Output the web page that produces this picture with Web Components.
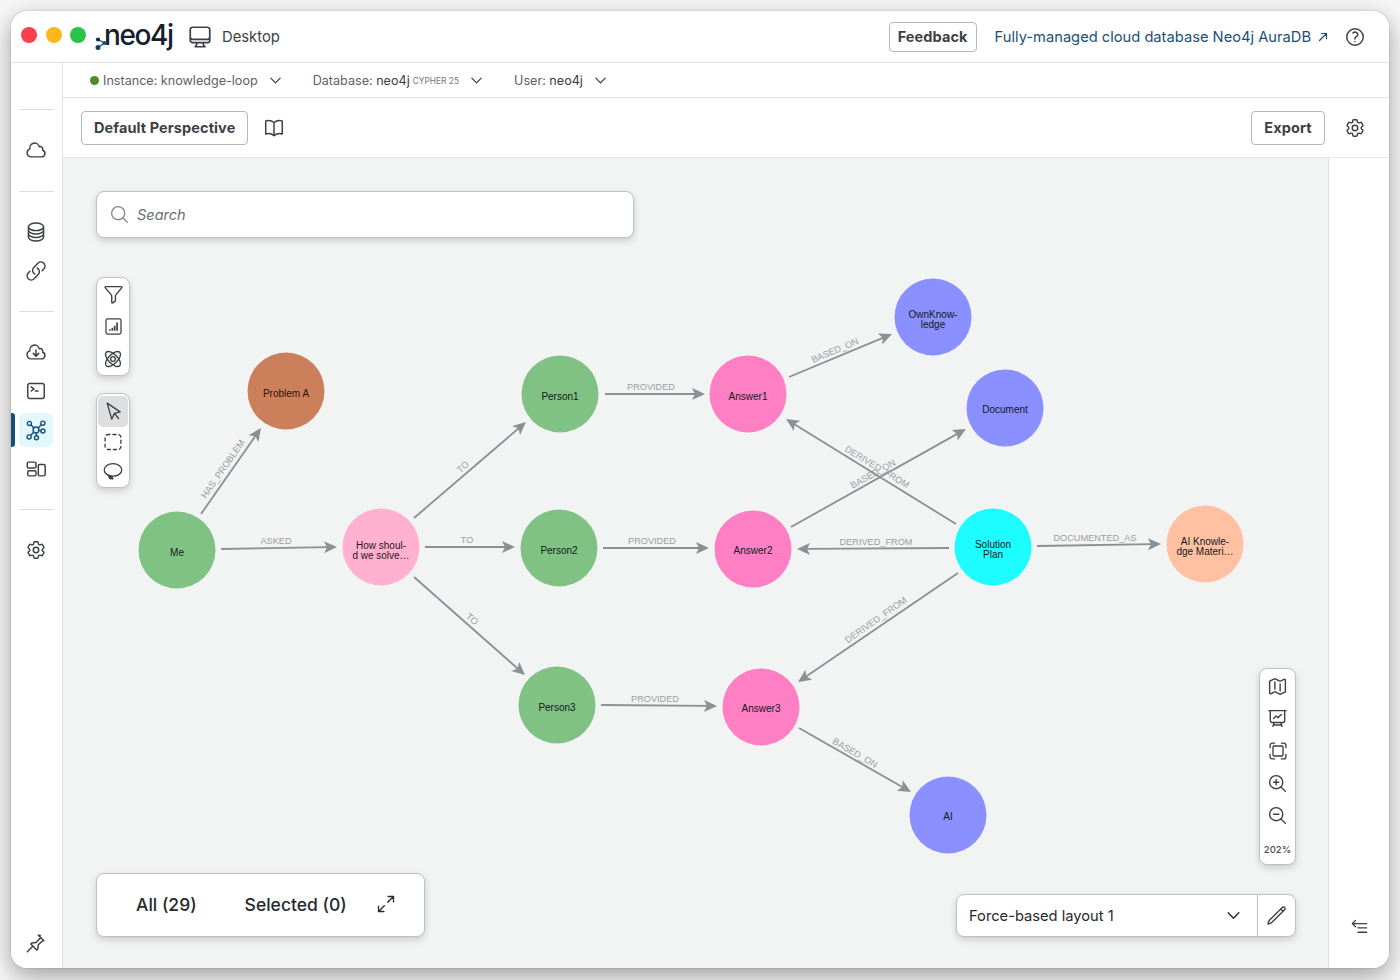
<!DOCTYPE html>
<html><head><meta charset="utf-8"><title>Neo4j Desktop</title>
<style>
html,body{margin:0;height:100%;}
body{width:1400px;height:980px;overflow:hidden;background:#f7f7f7;font-family:"Inter","Liberation Sans",sans-serif;color:#3a3d42;padding:11px 11px 12px;box-sizing:border-box;display:flex;}
</style></head>
<body>
<neo-window>
  <neo-titlebar slot="title"></neo-titlebar>
  <neo-sidebar slot="side"></neo-sidebar>
  <neo-connbar slot="conn"></neo-connbar>
  <neo-toolbar slot="tools"></neo-toolbar>
  <neo-canvas slot="canvas"></neo-canvas>
</neo-window>
<script>
const P={
cloud:'<path d="M2.25 15a4.5 4.5 0 004.5 4.5H18a3.75 3.75 0 001.332-7.257 3 3 0 00-3.758-3.848 5.25 5.25 0 00-10.233 2.33A4.5 4.5 0 002.25 15z"/>',
db:'<path d="M20.25 6.375c0 2.278-3.694 4.125-8.25 4.125S3.75 8.653 3.75 6.375m16.5 0c0-2.278-3.694-4.125-8.25-4.125S3.75 4.097 3.75 6.375m16.5 0v11.25c0 2.278-3.694 4.125-8.25 4.125s-8.25-1.847-8.25-4.125V6.375m16.5 0v3.75m-16.5-3.75v3.75m16.5 0v3.75C20.25 16.153 16.556 18 12 18s-8.25-1.847-8.25-4.125v-3.75m16.5 0c0 2.278-3.694 4.125-8.25 4.125s-8.25-1.847-8.25-4.125"/>',
link:'<path d="M13.19 8.688a4.5 4.5 0 011.242 7.244l-4.5 4.5a4.5 4.5 0 01-6.364-6.364l1.757-1.757m13.35-.622l1.757-1.757a4.5 4.5 0 00-6.364-6.364l-4.5 4.5a4.5 4.5 0 001.242 7.244"/>',
clouddown:'<path d="M12 9.75v6.75m0 0l-3-3m3 3l3-3m-8.25 6a4.5 4.5 0 01-1.41-8.775 5.25 5.25 0 0110.233-2.33 3 3 0 013.758 3.848A3.752 3.752 0 0118 19.5H6.75z"/>',
term:'<path d="M6.75 7.5l3 2.25-3 2.25m4.5 0h3m-9 8.25h13.5A2.25 2.25 0 0021 18V6a2.25 2.25 0 00-2.25-2.25H5.25A2.25 2.25 0 003 6v12a2.25 2.25 0 002.25 2.25z"/>',
gear:'<path d="M9.594 3.94c.09-.542.56-.94 1.11-.94h2.593c.55 0 1.02.398 1.11.94l.213 1.281c.063.374.313.686.645.87.074.04.147.083.22.127.324.196.72.257 1.075.124l1.217-.456a1.125 1.125 0 011.37.49l1.296 2.247a1.125 1.125 0 01-.26 1.431l-1.003.827c-.293.24-.438.613-.431.992a6.759 6.759 0 010 .255c-.007.378.138.75.43.99l1.005.828c.424.35.534.954.26 1.43l-1.298 2.247a1.125 1.125 0 01-1.369.491l-1.217-.456c-.355-.133-.75-.072-1.076.124a6.57 6.57 0 01-.22.128c-.331.183-.581.495-.644.869l-.213 1.28c-.09.543-.56.941-1.11.941h-2.594c-.55 0-1.02-.398-1.11-.94l-.213-1.281c-.062-.374-.312-.686-.644-.87a6.52 6.52 0 01-.22-.127c-.325-.196-.72-.257-1.076-.124l-1.217.456a1.125 1.125 0 01-1.369-.49l-1.297-2.247a1.125 1.125 0 01.26-1.431l1.004-.827c.292-.24.437-.613.43-.992a6.932 6.932 0 010-.255c.007-.378-.138-.75-.43-.99l-1.004-.828a1.125 1.125 0 01-.26-1.43l1.297-2.247a1.125 1.125 0 011.37-.491l1.216.456c.356.133.751.072 1.076-.124.072-.044.146-.087.22-.128.332-.183.582-.495.644-.869l.214-1.281z"/><path d="M15 12a3 3 0 11-6 0 3 3 0 016 0z"/>',
book:'<path d="M12 6.042A8.967 8.967 0 006 3.75c-1.052 0-2.062.18-3 .512v14.25A8.987 8.987 0 016 18c2.305 0 4.408.867 6 2.292m0-14.25a8.966 8.966 0 016-2.292c1.052 0 2.062.18 3 .512v14.25A8.987 8.987 0 0018 18a8.967 8.967 0 00-6 2.292m0-14.25v14.25"/>',
desktop:'<path d="M9 17.25v1.007a3 3 0 01-.879 2.122L7.5 21h9l-.621-.621A3 3 0 0115 18.257V17.25m6-12V15a2.25 2.25 0 01-2.25 2.25H5.25A2.25 2.25 0 013 15V5.25m18 0A2.25 2.25 0 0018.75 3H5.25A2.25 2.25 0 003 5.25m18 0V12a2.25 2.25 0 01-2.25 2.25H5.25A2.25 2.25 0 013 12V5.25"/>',
help:'<path d="M9.879 7.519c1.171-1.025 3.071-1.025 4.242 0 1.172 1.025 1.172 2.687 0 3.712-.203.179-.43.326-.67.442-.745.361-1.45.999-1.45 1.827v.75M21 12a9 9 0 11-18 0 9 9 0 0118 0zm-9 5.25h.008v.008H12v-.008z"/>',
upright:'<path d="M5 19L19 5m0 0H8.5M19 5v10.5"/>',
chevron:'<path d="M19.5 8.25l-7.5 7.5-7.5-7.5"/>',
funnel:'<path d="M3.2 3h17.600c.7 0 1.100.8.6 1.400l-6.500 7.700c-.4.5-.7 1.100-.7 1.800v4.600c0 .6-.3 1-.7 1.300l-2.300 1.700c-.5.400-1.200 0-1.200-.6v-7c0-.7-.3-1.300-.7-1.800L2.600 4.400c-.5-.6-.1-1.400.6-1.400z"/>',
chart:'<rect x="2.500" y="2.500" width="19" height="19" rx="2.200"/><path d="M7.500 17.500v-2M10.500 17.500v-4M13.500 17.500v-6.500M16.500 17.500V7" stroke-width="2.100" stroke-linecap="butt"/>',
atom:'<ellipse cx="12" cy="12" rx="11.500" ry="5.400" transform="rotate(45 12 12)"/><ellipse cx="12" cy="12" rx="11.500" ry="5.400" transform="rotate(-45 12 12)"/><circle cx="12" cy="12" r="2.800"/>',
cursor:'<path d="M5 2.500l15.500 10.500-6.800 1.800-3.200 7L5 2.500zM13.700 14.800l5 6.200"/>',
marquee:'<rect x="2.500" y="3" width="19" height="18" rx="3.500" stroke-dasharray="3.700 3.700" stroke-dashoffset="1.500"/>',
lasso:'<ellipse cx="12" cy="9.500" rx="10.500" ry="7.500"/><path d="M6 15.500c.3 1.500 1.500 2.500 3 2.500 1.400 0 1.700 2.200.2 2.200-1.300 0-2.300-1.200-1.600-2.300.6-.9 2.300-1 3.200.1.600.8.900 1.500 1 2.500"/>',
map:'<path d="M9 6.750V15m6-6v8.250m.503 3.498l4.875-2.437c.381-.19.622-.58.622-1.006V4.820c0-.836-.88-1.380-1.628-1.006l-3.869 1.934c-.317.159-.69.159-1.006 0L9.503 3.252a1.125 1.125 0 00-1.006 0L3.622 5.689C3.240 5.880 3 6.270 3 6.695V19.180c0 .836.88 1.380 1.628 1.006l3.869-1.934c.317-.159.69-.159 1.006 0l4.994 2.497c.317.158.69.158 1.006 0z"/>',
slides:'<path d="M3.750 3v11.250A2.250 2.250 0 006 16.500h2.250M3.750 3h-1.500m1.500 0h16.500m0 0h1.500m-1.500 0v11.250A2.250 2.250 0 0118 16.500h-2.250m-7.500 0h7.500m-7.500 0l-1 3m8.500-3l1 3m0 0l.5 1.500m-.5-1.500h-9.500m0 0l-.5 1.500m.75-9l3-3 2.148 2.148A12.061 12.061 0 0116.500 7.605"/>',
fit:'<rect x="6" y="6" width="12" height="12" rx="1.200"/><path d="M2.500 8V5.500a3 3 0 013-3H8M16 2.500h2.500a3 3 0 013 3V8M21.500 16v2.500a3 3 0 01-3 3H16M8 21.500H5.500a3 3 0 01-3-3V16"/>',
zoomin:'<path d="M21 21l-5.197-5.197m0 0A7.500 7.500 0 105.196 5.196a7.500 7.500 0 0010.607 10.607zM10.500 7.500v6m3-3h-6"/>',
zoomout:'<path d="M21 21l-5.197-5.197m0 0A7.500 7.500 0 105.196 5.196a7.500 7.500 0 0010.607 10.607zM13.500 10.500h-6"/>',
search:'<path d="M21 21l-5.197-5.197m0 0A7.500 7.500 0 105.196 5.196a7.500 7.500 0 0010.607 10.607z"/>',
expand:'<path d="M14 10L21 3m0 0h-6.500M21 3v6.500M10 14l-7 7m0 0h6.500M3 21v-6.500"/>',
pencil:'<path d="M16.862 4.487l1.687-1.688a1.875 1.875 0 112.652 2.652L6.832 19.820a4.500 4.500 0 01-1.897 1.130l-2.685.8.8-2.685a4.500 4.500 0 011.130-1.897L16.863 4.487zm0 0L19.500 7.125"/>',
collapse:'<path d="M3 7H21M3 7l4-4M3 7l4 4M10 12.500h11M10 18h11"/>',
pin:'<path d="M14.500 3.500l6 6-1.500.3-4.500 4.200-.5 4.500-1.200 1.200-6.500-6.500 1.200-1.200 4.500-.5 4.200-4.500.3-3.500zM8 16l-5.500 5.500"/>',
dash:'<rect x="2.500" y="4.500" width="9.500" height="6.500" rx="1.500"/><rect x="3" y="14" width="9" height="5.500" rx="1.500"/><rect x="14.500" y="7" width="7.500" height="12.500" rx="1.500"/>',
graph:'<circle cx="12" cy="12" r="3.200"/><circle cx="4.800" cy="4.800" r="2.200"/><circle cx="19.500" cy="4.500" r="2.200"/><circle cx="4.500" cy="19.500" r="2.200"/><circle cx="19.500" cy="13" r="2.200"/><circle cx="12.500" cy="20.500" r="2.200"/><path d="M6.500 6.500l3.200 3.200M17.800 6.200l-3.500 3.600M6.200 17.800l3.500-3.500M15.200 12.400l2.200.3M12.200 15.200l.2 3.100"/>'
};
function tpl(css,html){const t=document.createElement('template');t.innerHTML=`<style>${css}</style>${html}`;return t;}
class Base extends HTMLElement{
  connectedCallback(){ if(this.shadowRoot)return; this.attachShadow({mode:'open'}).appendChild(this.constructor.t.content.cloneNode(true)); }
}
class NeoIcon extends HTMLElement{
  static get observedAttributes(){return ['name'];}
  attributeChangedCallback(){ if(this.shadowRoot)this.render(); }
  connectedCallback(){ if(!this.shadowRoot){this.attachShadow({mode:'open'});this.render();} }
  render(){
    const s=this.getAttribute('size')||22, w=this.getAttribute('sw')||1.6;
    this.shadowRoot.innerHTML=`<style>:host{display:inline-flex;flex:none;width:${s}px;height:${s}px;color:inherit}svg{display:block;width:100%;height:100%;overflow:visible}</style><svg viewBox="0 0 24 24" fill="none" stroke="currentColor" stroke-width="${w}" stroke-linecap="round" stroke-linejoin="round">${P[this.getAttribute('name')]||''}</svg>`;
  }
}
customElements.define('neo-icon',NeoIcon);

class NeoButton extends Base{}
NeoButton.t=tpl(`:host{display:inline-flex;align-items:center;justify-content:center;box-sizing:border-box;border:1px solid #b4b7ba;border-radius:4px;background:#fff;font-weight:700;font-size:14.500px;color:#3c3f44;letter-spacing:.1px;padding:0 12px;height:34px;white-space:nowrap}`,`<slot></slot>`);
customElements.define('neo-button',NeoButton);

class NeoChip extends Base{}
NeoChip.t=tpl(`:host{display:inline-flex;align-items:center;font-size:12.600px;color:#5e6167;white-space:nowrap}
neo-icon{margin-left:10px;color:#3c3f44}`,`<slot></slot><neo-icon name="chevron" size="15" sw="2"></neo-icon>`);
customElements.define('neo-chip',NeoChip);

class NeoWindow extends Base{}
NeoWindow.t=tpl(`:host{display:grid;flex:1;grid-template-columns:52px 1fr 60px;grid-template-rows:52px 35px 60px 1fr;background:#fff;border-radius:16px;overflow:hidden;box-shadow:0 8px 24px rgba(0,0,0,.36),0 0 2px rgba(0,0,0,.2);position:relative}
.t{grid-column:1/4;grid-row:1;display:grid}.s{grid-column:1;grid-row:2/5;display:grid}.c{grid-column:2/4;grid-row:2;display:grid}.o{grid-column:2/4;grid-row:3;display:grid}.g{grid-column:2/4;grid-row:4;display:grid;min-height:0}`,
`<div class="t"><slot name="title"></slot></div><div class="s"><slot name="side"></slot></div><div class="c"><slot name="conn"></slot></div><div class="o"><slot name="tools"></slot></div><div class="g"><slot name="canvas"></slot></div>`);
customElements.define('neo-window',NeoWindow);

class NeoTitlebar extends Base{}
NeoTitlebar.t=tpl(`:host{display:flex;align-items:center;border-bottom:1px solid #dfe0e2;padding:0 23px 0 10px;box-sizing:border-box}
.lights{display:flex;gap:8.500px;margin-top:-3px}.l{width:16px;height:16px;border-radius:50%}
.logo{margin-left:9px;position:relative;width:78px;height:30px;color:#14202e;flex:none}
.logo span{font:500 28px/30px "Inter","Liberation Sans",sans-serif;letter-spacing:-1.400px;position:absolute;left:9px;top:-2px}
.logo svg{position:absolute;left:0;top:11px}
.dk{display:flex;align-items:center;gap:9px;margin-left:14px;font-size:14.800px;color:#3c3f44}
.sp{flex:1}
a{color:#1d4f73;font-size:14.700px;text-decoration:none;margin-left:18px;display:flex;align-items:center;gap:6px;white-space:nowrap}
neo-button{height:30px;padding:0 8px}
.h{margin-left:15px;color:#3c3f44;display:flex}`,
`<div class="lights"><div class="l" style="background:#fb3f4f"></div><div class="l" style="background:#fdb71c"></div><div class="l" style="background:#2cc249"></div></div>
<div class="logo"><span>neo4j</span><svg width="16" height="20" viewBox="0 0 16 20"><path d="M3 6.500L9.500 10M3 14.500L9.500 10" stroke="#14507c" stroke-width="1.300"/><circle cx="3" cy="6.500" r="2.100" fill="#12283c"/><circle cx="3" cy="14.500" r="2.500" fill="#14406a"/><circle cx="9.500" cy="10" r="2.100" fill="#14507c"/></svg></div>
<div class="dk"><neo-icon name="desktop" size="26"></neo-icon><span>Desktop</span></div>
<div class="sp"></div>
<neo-button>Feedback</neo-button>
<a>Fully-managed cloud database Neo4j AuraDB<neo-icon name="upright" size="12" sw="2.400"></neo-icon></a>
<div class="h"><neo-icon name="help" size="22"></neo-icon></div>`);
customElements.define('neo-titlebar',NeoTitlebar);

class NeoConnbar extends Base{}
NeoConnbar.t=tpl(`:host{display:flex;align-items:center;border-bottom:1px solid #e2e3e5;padding:1px 0 0 27px;box-sizing:border-box}
.dot{width:9px;height:9px;border-radius:50%;background:#4f8a27;margin-right:4px}
b{font-weight:400;color:#3a3d42}small{font-size:8.400px;color:#73767b;margin-left:3px}
neo-chip+neo-chip{margin-left:30px}`,
`<div class="dot"></div><neo-chip>Instance: knowledge-loop</neo-chip><neo-chip>Database:&nbsp;<b>neo4j</b><small>CYPHER 25</small></neo-chip><neo-chip>User:&nbsp;<b>neo4j</b></neo-chip>`);
customElements.define('neo-connbar',NeoConnbar);

class NeoToolbar extends Base{}
NeoToolbar.t=tpl(`:host{display:flex;align-items:center;border-bottom:1px solid #e6e7e8;padding:0 23px 0 18px;box-sizing:border-box;background:#fff}
neo-icon{color:#3c3f44}.b{margin-left:15px}.sp{flex:1}.g{margin-left:19px}.x{width:74px;padding:0}`,
`<neo-button>Default Perspective</neo-button><neo-icon class="b" name="book" size="22"></neo-icon><div class="sp"></div><neo-button class="x">Export</neo-button><neo-icon class="g" name="gear" size="22"></neo-icon>`);
customElements.define('neo-toolbar',NeoToolbar);

class NeoNavItem extends Base{
  connectedCallback(){super.connectedCallback();this.shadowRoot.querySelector('neo-icon').setAttribute('name',this.getAttribute('icon'));}
}
NeoNavItem.t=tpl(`:host{display:flex;align-items:center;justify-content:center;height:39px;width:50px;position:relative;color:#3c3f44;flex:none}
:host([active]){color:#1a5480}
:host([active]) .bg{background:#e3f8fc}
:host([active]) .bar{position:absolute;left:0;top:2.500px;height:34px;width:4px;background:#144f7a;border-radius:0 3px 3px 0}
.bg{width:34px;height:34px;border-radius:6px;display:flex;align-items:center;justify-content:center}`,
`<div class="bar"></div><div class="bg"><neo-icon size="22"></neo-icon></div>`);
customElements.define('neo-nav-item',NeoNavItem);

class NeoSidebar extends Base{}
NeoSidebar.t=tpl(`:host{display:flex;flex-direction:column;border-right:1px solid #e2e3e5;box-sizing:border-box;width:52px;padding:46px 0 5.500px;background:#fff}
hr{border:0;height:1px;background:#dcdddf;margin:0 8px;flex:none}
.g{padding:20.500px 0;display:flex;flex-direction:column}.g.a{padding:20px 0 22px}.sp{flex:1}`,
`<hr><div class="g a"><neo-nav-item icon="cloud"></neo-nav-item></div><hr>
<div class="g"><neo-nav-item icon="db"></neo-nav-item><neo-nav-item icon="link"></neo-nav-item></div><hr>
<div class="g"><neo-nav-item icon="clouddown"></neo-nav-item><neo-nav-item icon="term"></neo-nav-item><neo-nav-item icon="graph" active></neo-nav-item><neo-nav-item icon="dash"></neo-nav-item></div><hr>
<div class="g"><neo-nav-item icon="gear"></neo-nav-item></div><div class="sp"></div><neo-nav-item icon="pin"></neo-nav-item>`);
customElements.define('neo-sidebar',NeoSidebar);

class NeoPanel extends Base{}
NeoPanel.t=tpl(`:host{display:flex;box-sizing:border-box;background:#fff;border:1px solid #bfc1c4;border-radius:8px;box-shadow:0 3px 7px rgba(0,0,0,.16)}`,`<slot></slot>`);
customElements.define('neo-panel',NeoPanel);

class NeoGraph extends HTMLElement{
  connectedCallback(){
    if(this.shadowRoot)return;
    const ox=63,oy=158;
    const N=[[177,550,'#7fc283',['Me'],'#10231a',1],[286,391,'#cb7f5a',['Problem A'],'#2b140a',1],[381,547,'#ffb1cf',['How shoul-','d we solve…'],'#2a1520',1.500],
    [560,394,'#7fc283',['Person1'],0,1],[559,548,'#7fc283',['Person2'],0,1],[557,705,'#7fc283',['Person3'],0,1],
    [748,394,'#ff7fc5',['Answer1'],0,1],[753,549,'#ff7fc5',['Answer2'],0,0],[761,707,'#ff7fc5',['Answer3'],0,0],
    [933,317,'#8a90ff',['OwnKnow-','ledge'],0,1],[1005,408,'#8a90ff',['Document'],0,0],[993,547,'#1dfdff',['Solution','Plan'],0,1],[1205,544,'#ffc1a2',['AI Knowle-','dge Materi…'],0,1],[948,815,'#8a90ff',['AI'],0,0]];
    const E=[[201,514,261,428,'HAS_PROBLEM',223,469,-55],[221,549,337,547,'ASKED',276,540.5,0],[414,518,526,422,'TO',463,467,-41],[425,547,515,547,'TO',467,539.5,0],[414,577,525,675,'TO',472,619,41],
    [605,394,705,394,'PROVIDED',651,386.500,0],[603,548,709,548,'PROVIDED',652,540.500,0],[601,705,717,706,'PROVIDED',655,698.500,0],
    [789,377,892,334,'BASED_ON',835,350.500,-23],[791,527,966,429,'BASED_ON',873,474,-29],[956,524,786,419,'DERIVED_FROM',877,467,31],[949,548,797,549,'DERIVED_FROM',876,541.500,0],[958,573,798,682,'DERIVED_FROM',876,620,-35],[1037,546,1161,544,'DOCUMENTED_AS',1095,537.500,0],[799,728,911,792,'BASED_ON',855,753,30]];
    let s='';
    for(const [x1,y1,x2,y2,l,lx,ly,r] of E){
      const a=Math.atan2(y2-y1,x2-x1)*180/Math.PI, d=Math.hypot(x2-x1,y2-y1);
      s+=`<g transform="translate(${x1-ox} ${y1-oy}) rotate(${a})"><path d="M0 0H${d-8}" stroke="#8b9095" stroke-width="1.800"/><path d="M${d} 0L${d-13} -6L${d-10} 0L${d-13} 6Z" fill="#8b9095"/></g>`;
      s+=`<text class="e" x="${lx-ox}" y="${ly-oy}" transform="rotate(${r} ${lx-ox} ${ly-oy})" text-anchor="middle" dominant-baseline="central">${l}</text>`;
    }
    for(const [x,y,c,t,tc,dy] of N){
      s+=`<circle cx="${x-ox}" cy="${y-oy}" r="38.500" fill="${c}"/>`;
      const y0=y-oy+1.500+dy-(t.length-1)*5;
      t.forEach((w,i)=>{s+=`<text class="n" x="${x-ox}" y="${y0+i*10}" text-anchor="middle" dominant-baseline="central" fill="${tc||'#14181c'}">${w}</text>`});
    }
    this.attachShadow({mode:'open'}).innerHTML=`<style>:host{display:block;position:absolute;inset:0}svg{display:block;width:100%;height:100%}
    text{font-family:"Liberation Sans",Arial,sans-serif}.e{font-size:9.200px;fill:#9a9ea2}.n{font-size:10px}</style><svg>${s}</svg>`;
  }
}
customElements.define('neo-graph',NeoGraph);

class NeoCanvas extends Base{}
NeoCanvas.t=tpl(`:host{display:grid;grid-template-columns:1fr 60px;min-height:0}
.main{position:relative;background:#f2f3f3;border-right:1px solid #dfe0e2;box-sizing:border-box;overflow:hidden}
.side{background:#fff;display:flex;align-items:flex-end;justify-content:center;padding-bottom:31px;color:#3c3f44}
neo-panel{position:absolute;color:#3c3f44}
.search{left:33px;top:33px;width:538px;height:47px;align-items:center;padding-left:12px;gap:7px;color:#6b6e73;font-size:14.500px;font-style:italic}
.search neo-icon{color:#85888c}
.v{width:34px;flex-direction:column;align-items:center;left:33px}
.tb{width:30px;height:32px;display:flex;align-items:center;justify-content:center;border-radius:5px;flex:none}
.tb.sel{background:#dcdee0}
.f1{top:119px;height:99px;justify-content:center}
.f2{top:235px;height:95px;padding-top:2px}
.f2 .tb{height:30.500px}
.f3{left:1196px;top:510px;width:37px;height:197px;padding-top:1px}
.f3 .tb{height:32.400px}
.pct{font-size:9.500px;font-weight:500;color:#4b4e53;margin-top:12px}
.bl{left:33px;top:715px;width:329px;height:64px;align-items:center;padding:0 0 2px 39px;font-size:17.500px;font-weight:500;color:#26292d;white-space:nowrap}
.bl span+span{margin-left:48px}.bl neo-icon{margin-left:29px}
.lay{left:893px;top:736px;width:340px;height:43px;align-items:center;color:#26292d;font-size:14.700px;padding-left:12px}
.lay .x{flex:1;white-space:nowrap}.lay .d{align-self:stretch;border-left:1px solid #bfc1c4;width:37px;display:flex;align-items:center;justify-content:center;color:#3c3f44}
.lay .ch{margin-right:15px}`,
`<div class="main"><neo-graph></neo-graph>
<neo-panel class="search"><neo-icon name="search" size="21"></neo-icon><span>Search</span></neo-panel>
<neo-panel class="v f1"><div class="tb"><neo-icon name="funnel" size="21"></neo-icon></div><div class="tb"><neo-icon name="chart" size="19"></neo-icon></div><div class="tb"><neo-icon name="atom" size="20"></neo-icon></div></neo-panel>
<neo-panel class="v f2"><div class="tb sel"><neo-icon name="cursor" size="20"></neo-icon></div><div class="tb"><neo-icon name="marquee" size="20"></neo-icon></div><div class="tb"><neo-icon name="lasso" size="20"></neo-icon></div></neo-panel>
<neo-panel class="v f3"><div class="tb"><neo-icon name="map" size="21"></neo-icon></div><div class="tb"><neo-icon name="slides" size="21"></neo-icon></div><div class="tb"><neo-icon name="fit" size="20"></neo-icon></div><div class="tb"><neo-icon name="zoomin" size="21"></neo-icon></div><div class="tb"><neo-icon name="zoomout" size="21"></neo-icon></div><div class="pct">202%</div></neo-panel>
<neo-panel class="bl"><span>All (29)</span><span>Selected (0)</span><neo-icon name="expand" size="20"></neo-icon></neo-panel>
<neo-panel class="lay"><span class="x">Force-based layout 1</span><neo-icon class="ch" name="chevron" size="17" sw="2"></neo-icon><div class="d"><neo-icon name="pencil" size="21"></neo-icon></div></neo-panel>
</div><div class="side"><neo-icon name="collapse" size="19"></neo-icon></div>`);
customElements.define('neo-canvas',NeoCanvas);
</script>
</body></html>
